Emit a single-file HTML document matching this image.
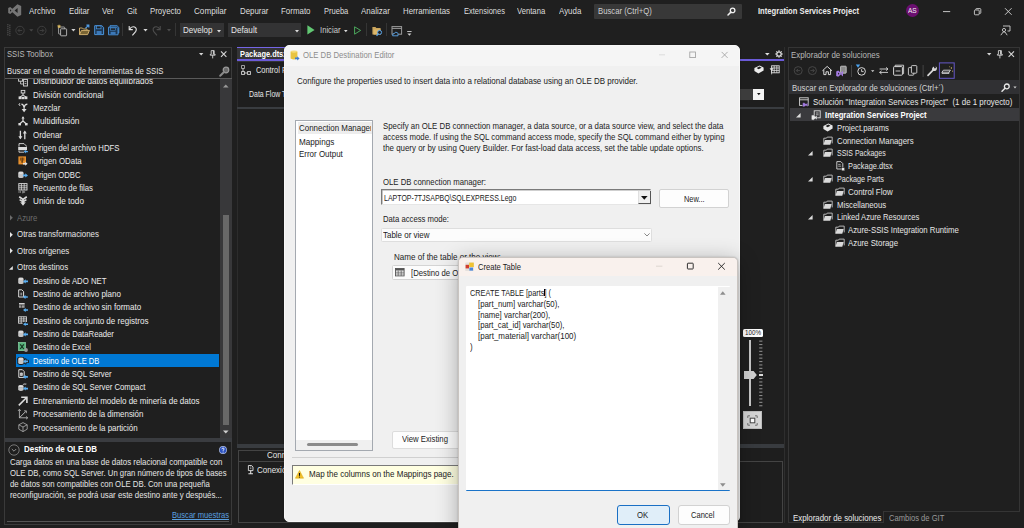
<!DOCTYPE html>
<html lang="es"><head><meta charset="utf-8"><title>Integration Services Project</title>
<style>
html,body{margin:0;padding:0;}
body{width:1024px;height:528px;overflow:hidden;background:#1f1f1f;position:relative;font-family:"Liberation Sans",sans-serif;font-size:8px;color:#e6e6e6;}
.b{position:absolute;box-sizing:border-box;}
.t{position:absolute;white-space:pre;line-height:12px;height:12px;font-size:8px;transform-origin:0 50%;}
.bold{font-weight:700;}
.dk{color:#1b1b1b;}
svg{position:absolute;overflow:visible;}
</style></head><body>

<div class="t " style="left:29px;top:5.20px;font-size:8.96px;transform:scaleX(0.8870);color:#dedede;">Archivo</div>
<div class="t " style="left:68.7px;top:5.20px;font-size:8.96px;transform:scaleX(0.8759);color:#dedede;">Editar</div>
<div class="t " style="left:102px;top:5.20px;font-size:8.96px;transform:scaleX(0.8774);color:#dedede;">Ver</div>
<div class="t " style="left:127px;top:5.20px;font-size:8.96px;transform:scaleX(0.8734);color:#dedede;">Git</div>
<div class="t " style="left:150px;top:5.20px;font-size:8.96px;transform:scaleX(0.8768);color:#dedede;">Proyecto</div>
<div class="t " style="left:194px;top:5.20px;font-size:8.96px;transform:scaleX(0.9066);color:#dedede;">Compilar</div>
<div class="t " style="left:239.5px;top:5.20px;font-size:8.96px;transform:scaleX(0.8805);color:#dedede;">Depurar</div>
<div class="t " style="left:281px;top:5.20px;font-size:8.96px;transform:scaleX(0.8844);color:#dedede;">Formato</div>
<div class="t " style="left:323.7px;top:5.20px;font-size:8.96px;transform:scaleX(0.8411);color:#dedede;">Prueba</div>
<div class="t " style="left:361.2px;top:5.20px;font-size:8.96px;transform:scaleX(0.8897);color:#dedede;">Analizar</div>
<div class="t " style="left:403px;top:5.20px;font-size:8.96px;transform:scaleX(0.8740);color:#dedede;">Herramientas</div>
<div class="t " style="left:463.5px;top:5.20px;font-size:8.96px;transform:scaleX(0.8400);color:#dedede;">Extensiones</div>
<div class="t " style="left:517.4px;top:5.20px;font-size:8.96px;transform:scaleX(0.8575);color:#dedede;">Ventana</div>
<div class="t " style="left:559px;top:5.20px;font-size:8.96px;transform:scaleX(0.8834);color:#dedede;">Ayuda</div>
<svg style="left:7.8px;top:4.2px" width="13.4" height="13" viewBox="0 0 13.4 13"><path d="M9.4 0.2 L13.2 1.9 V11.1 L9.4 12.8 L4.4 8.2 L2.2 10 L0.2 9 V4 L2.2 3 L4.4 4.8 Z M9.6 4 L6.6 6.5 L9.6 9 Z M2 5.2 V7.8 L3.4 6.5 Z" fill="#757575" fill-rule="evenodd"/></svg>
<div class="b " style="left:594px;top:3.5px;width:147.5px;height:15px;background:#383838;border-radius:1px;"></div>
<div class="t " style="left:597.7px;top:5.20px;font-size:8.96px;transform:scaleX(0.8627);color:#d0d0d0;">Buscar (Ctrl+Q)</div>
<svg style="left:727px;top:7px" width="9" height="9" viewBox="0 0 9 9"><circle cx="5.6" cy="3.4" r="2.3" fill="none" stroke="#f0f0f0" stroke-width="1.3"/><path d="M3.9 5.1 L1 8" stroke="#f0f0f0" stroke-width="1.5" stroke-linecap="round"/></svg>
<div class="t " style="left:758.3px;top:5.40px;font-size:8.96px;font-weight:700;transform:scaleX(0.8523);color:#ececec;">Integration Services Project</div>
<div class="b " style="left:905.8px;top:3.8px;width:13.4px;height:13.4px;background:#6b0f70;border-radius:50%;"></div>
<div class="t " style="left:907.9px;top:4.50px;font-size:7.62px;transform:scaleX(0.8563);color:#f4f4f4;">AS</div>
<svg style="left:943px;top:6px" width="70" height="12" viewBox="0 0 70 12"><path d="M0 5.6 H7.2" stroke="#d8d8d8" stroke-width="0.9"/><rect x="31.4" y="4" width="4.8" height="4.8" rx="0.8" fill="none" stroke="#d0d0d0" stroke-width="0.9"/><path d="M32.8 3.8 V3.2 Q32.8 2.6 33.4 2.6 H37 Q37.8 2.6 37.8 3.4 V6.8 Q37.8 7.4 37.2 7.4 H36.4" fill="none" stroke="#d0d0d0" stroke-width="0.9"/><path d="M62 2.2 L68.6 8.8 M68.6 2.2 L62 8.8" stroke="#d8d8d8" stroke-width="0.9"/></svg>
<svg style="left:1000px;top:25px" width="11" height="11" viewBox="0 0 11 11"><path d="M3 1 H10 V6 H7.5" fill="none" stroke="#cfcfcf" stroke-width="0.9"/><circle cx="4" cy="5" r="1.6" fill="none" stroke="#cfcfcf" stroke-width="0.9"/><path d="M0.8 10.2 L3.2 7 H5 L7.2 10.2" fill="none" stroke="#cfcfcf" stroke-width="0.9"/></svg>
<svg style="left:7px;top:23.8px" width="4" height="13" viewBox="0 0 4 13"><rect x="0" y="0.0" width="1.6" height="0.9" fill="#444"/><rect x="2" y="0.0" width="1.6" height="0.9" fill="#2c2c2c"/><rect x="2" y="1.0" width="1.6" height="0.9" fill="#444"/><rect x="0" y="1.0" width="1.6" height="0.9" fill="#2c2c2c"/><rect x="0" y="2.0" width="1.6" height="0.9" fill="#444"/><rect x="2" y="2.0" width="1.6" height="0.9" fill="#2c2c2c"/><rect x="2" y="3.0" width="1.6" height="0.9" fill="#444"/><rect x="0" y="3.0" width="1.6" height="0.9" fill="#2c2c2c"/><rect x="0" y="4.0" width="1.6" height="0.9" fill="#444"/><rect x="2" y="4.0" width="1.6" height="0.9" fill="#2c2c2c"/><rect x="2" y="5.0" width="1.6" height="0.9" fill="#444"/><rect x="0" y="5.0" width="1.6" height="0.9" fill="#2c2c2c"/><rect x="0" y="6.0" width="1.6" height="0.9" fill="#444"/><rect x="2" y="6.0" width="1.6" height="0.9" fill="#2c2c2c"/><rect x="2" y="7.0" width="1.6" height="0.9" fill="#444"/><rect x="0" y="7.0" width="1.6" height="0.9" fill="#2c2c2c"/><rect x="0" y="8.0" width="1.6" height="0.9" fill="#444"/><rect x="2" y="8.0" width="1.6" height="0.9" fill="#2c2c2c"/><rect x="2" y="9.0" width="1.6" height="0.9" fill="#444"/><rect x="0" y="9.0" width="1.6" height="0.9" fill="#2c2c2c"/><rect x="0" y="10.0" width="1.6" height="0.9" fill="#444"/><rect x="2" y="10.0" width="1.6" height="0.9" fill="#2c2c2c"/><rect x="2" y="11.0" width="1.6" height="0.9" fill="#444"/><rect x="0" y="11.0" width="1.6" height="0.9" fill="#2c2c2c"/></svg>
<svg style="left:15px;top:25px" width="34" height="11" viewBox="0 0 34 11"><circle cx="5" cy="5.5" r="4.2" fill="none" stroke="#414141" stroke-width="0.9"/><path d="M7.2 5.5 H3 M4.8 3.7 L3 5.5 L4.8 7.3" stroke="#414141" stroke-width="0.9" fill="none"/><path d="M14.2 4.2 H18.4 L16.3 6.6 Z" fill="#474747"/><circle cx="26.8" cy="5.5" r="4.2" fill="none" stroke="#414141" stroke-width="0.9"/><path d="M24.6 5.5 H28.8 M27 3.7 L28.8 5.5 L27 7.3" stroke="#414141" stroke-width="0.9" fill="none"/></svg>
<div class="b " style="left:51.5px;top:23.3px;width:1.2px;height:13px;background:#353535;"></div>
<svg style="left:57px;top:24px" width="20" height="13" viewBox="0 0 20 13"><rect x="1.6" y="3" width="6" height="7" rx="0.6" fill="none" stroke="#bdbdbd" stroke-width="0.8"/><rect x="3.6" y="4.8" width="6" height="7" rx="0.6" fill="#1f1f1f" stroke="#cdcdcd" stroke-width="0.8"/><path d="M2 0.2 L2.7 1.5 L4.2 1.7 L3.1 2.7 L3.4 4.2 L2 3.5 L0.7 4.2 L1 2.7 L-0.1 1.7 L1.4 1.5 Z" fill="#d9b860"/><path d="M14.3 5 H18.5 L16.4 7.5 Z" fill="#cfcfcf"/></svg>
<svg style="left:79px;top:24px" width="11" height="13" viewBox="0 0 11 13"><path d="M0.5 4 H3.4 L4.4 5 H8 V6" fill="none" stroke="#d4b26c" stroke-width="0.9"/><path d="M0.5 4 V10.6 H8.6 L10.4 6.4 H2.4 L0.6 10.4" fill="#7a6534" stroke="#dcb974" stroke-width="0.9"/><path d="M6.4 4.4 L9.2 1.6 M7.4 1.2 H9.8 V3.6" stroke="#4f9ce6" stroke-width="1.2" fill="none"/></svg>
<svg style="left:93.5px;top:25.3px" width="26" height="11" viewBox="0 0 26 11"><path d="M0.7 0.7 H7.8 L9.6 2.4 V9.6 H0.7 Z" fill="#1c3652" stroke="#4a94dc" stroke-width="1"/><rect x="2.6" y="1" width="4.4" height="2.8" fill="#1f1f1f" stroke="#4a94dc" stroke-width="0.7"/><rect x="2.6" y="6" width="5" height="3.4" fill="#3b78b8"/><path d="M16 0.7 H23 L24.8 2.4 V8 H16 Z" fill="#1c3652" stroke="#4a94dc" stroke-width="0.9"/><path d="M14.5 2.2 H22.6 L24 3.6 V9.8 H14.5 Z" fill="#1c3652" stroke="#4a94dc" stroke-width="0.9"/><rect x="16.4" y="3" width="5" height="2.2" fill="#1f1f1f" stroke="#4a94dc" stroke-width="0.6"/><rect x="16.6" y="6.8" width="5" height="2.8" fill="#3b78b8"/></svg>
<div class="b " style="left:122.3px;top:23.3px;width:1.2px;height:13px;background:#353535;"></div>
<svg style="left:127px;top:24px" width="46" height="13" viewBox="0 0 46 13"><path d="M2.2 2 V5.6 H5.8" fill="none" stroke="#e2e2e2" stroke-width="1.1"/><path d="M2.4 5.4 Q4.6 1.8 7.6 3 Q10.4 4.6 8.6 7.6 L5.4 11.4" fill="none" stroke="#e2e2e2" stroke-width="1.1"/><path d="M16.4 5.1 H20.6 L18.5 7.6 Z" fill="#d6d6d6"/><path d="M33.2 2 V5.6 H29.6" fill="none" stroke="#4d4d4d" stroke-width="1.1"/><path d="M33 5.4 Q30.8 1.8 27.8 3 Q25 4.6 26.8 7.6 L30 11.4" fill="none" stroke="#4d4d4d" stroke-width="1.1"/><path d="M40 5.1 H44 L42 7.5 Z" fill="#4c4c4c"/></svg>
<div class="b " style="left:174.6px;top:23.3px;width:1.2px;height:13px;background:#353535;"></div>
<div class="b " style="left:180px;top:23px;width:43.5px;height:14.3px;background:#333334;"></div>
<div class="t " style="left:183px;top:24.30px;font-size:8.96px;transform:scaleX(0.8974);color:#e6e6e6;">Develop</div>
<svg style="left:216.5px;top:29.5px" width="4" height="3" viewBox="0 0 4 3"><path d="M0 0 H4 L2 2.4 Z" fill="#dcdcdc"/></svg>
<div class="b " style="left:227.5px;top:23px;width:73.6px;height:14.3px;background:#333334;"></div>
<div class="t " style="left:230.5px;top:24.30px;font-size:8.96px;transform:scaleX(0.9159);color:#e6e6e6;">Default</div>
<svg style="left:294.5px;top:29.5px" width="4" height="3" viewBox="0 0 4 3"><path d="M0 0 H4 L2 2.4 Z" fill="#dcdcdc"/></svg>
<svg style="left:307px;top:25px" width="8" height="10" viewBox="0 0 8 10"><path d="M0.4 0.3 L7.6 4.9 L0.4 9.6 Z" fill="#62c873"/></svg>
<div class="t " style="left:320px;top:24.30px;font-size:8.96px;transform:scaleX(0.8578);color:#cdcdcd;">Iniciar</div>
<svg style="left:344px;top:29.5px" width="4" height="3" viewBox="0 0 4 3"><path d="M0 0 H3.6 L1.8 2.2 Z" fill="#dcdcdc"/></svg>
<svg style="left:353.5px;top:26px" width="8" height="9" viewBox="0 0 8 9"><path d="M0.6 0.8 L6.6 4.4 L0.6 8.2 Z" fill="none" stroke="#4aa85c" stroke-width="1"/></svg>
<div class="b " style="left:366px;top:23.3px;width:1.2px;height:13px;background:#353535;"></div>
<svg style="left:371.5px;top:25.5px" width="11" height="11" viewBox="0 0 11 11"><path d="M0.4 1 H3.4 L4.4 2 H8.6 V8.6 H0.4 Z" fill="#c9a45c"/><path d="M1.6 3.4 H8.6 V8.6 H1.6 Z" fill="#dcb76a"/><circle cx="7.6" cy="6.4" r="2" fill="#1f1f1f" stroke="#5aa5ea" stroke-width="1"/><path d="M6.2 7.8 L4.6 9.8" stroke="#5aa5ea" stroke-width="1.2"/></svg>
<div class="b " style="left:386px;top:23.3px;width:1.2px;height:13px;background:#353535;"></div>
<svg style="left:390.5px;top:25.5px" width="12" height="11" viewBox="0 0 12 11"><rect x="1" y="0.6" width="9.6" height="7.6" fill="none" stroke="#9c9c9c" stroke-width="1"/><path d="M1 2.4 H10.6" stroke="#9c9c9c" stroke-width="1"/><path d="M1.6 9.8 Q1.6 7 3.8 7.2 Q4.4 5.4 6 6.6 Q7.6 6.6 7 9.8 Z" fill="#1f1f1f" stroke="#5aa5ea" stroke-width="0.9"/></svg>
<svg style="left:406.5px;top:30.5px" width="5" height="6" viewBox="0 0 5 6"><path d="M0.2 0.5 H4.6" stroke="#cfcfcf" stroke-width="0.9"/><path d="M0.4 2.4 H4.4 L2.4 4.8 Z" fill="#cfcfcf"/></svg>
<div class="b " style="left:4px;top:47px;width:228px;height:478px;border:1px solid #3a3a3a;background:#1f1f1f;"></div>
<div class="t " style="left:7px;top:48.40px;font-size:8.96px;transform:scaleX(0.8578);color:#b8b8b8;">SSIS Toolbox</div>
<svg style="left:198.5px;top:50px" width="30" height="9" viewBox="0 0 30 9"><path d="M0 3 H4.4 L2.2 5.6 Z" fill="#d6d6d6"/><path d="M12.2 0.6 H15.2 V4.4 H16.2 V5.2 H11.2 V4.4 H12.2 Z M13.7 5.2 V8.4" fill="#1f1f1f" stroke="#d6d6d6" stroke-width="0.9"/><path d="M14.4 0.8 V4.6" stroke="#d6d6d6" stroke-width="1"/><path d="M22 1.4 L27.4 6.8 M27.4 1.4 L22 6.8" stroke="#d6d6d6" stroke-width="1.1"/></svg>
<div class="b " style="left:4.5px;top:78.2px;width:227px;height:1px;background:#5a5a5a;"></div>
<div class="t " style="left:6.5px;top:64.90px;font-size:8.96px;transform:scaleX(0.8586);color:#e6e6e6;">Buscar en el cuadro de herramientas de SSIS</div>
<svg style="left:218.5px;top:65.5px" width="11" height="11" viewBox="0 0 11 11"><circle cx="7" cy="4" r="2.8" fill="#6a6a6a" stroke="#9a9a9a" stroke-width="1.2"/><path d="M5 6 L1.2 9.8" stroke="#8a8a8a" stroke-width="2" stroke-linecap="round"/></svg>
<div class="b " style="left:5px;top:78.5px;width:215px;height:359px;background:#1f1f1f;"></div>
<div class="b " style="left:220px;top:79px;width:12px;height:358.8px;background:#38383a;"></div>
<div class="b " style="left:222.5px;top:214.5px;width:6.2px;height:210.5px;background:#686868;"></div>
<svg style="left:223px;top:83.5px" width="6" height="4" viewBox="0 0 6 4"><path d="M0 3.4 L2.8 0.4 L5.6 3.4 Z" fill="#9a9a9a"/></svg>
<svg style="left:223px;top:429.5px" width="6" height="4" viewBox="0 0 6 4"><path d="M0 0.4 L2.8 3.4 L5.6 0.4 Z" fill="#d0d0d0"/></svg>
<div class="b" style="left:5px;top:78.5px;width:215px;height:8px;overflow:hidden;">
<svg style="left:13px;top:-1.7px" width="10" height="10" viewBox="0 0 10 10"><rect x="0.6" y="0.8" width="4" height="3.4" fill="none" stroke="#dcdcdc" stroke-width="0.9"/><rect x="5.6" y="2.4" width="3.8" height="6.6" fill="none" stroke="#dcdcdc" stroke-width="0.9"/><path d="M2.6 4.4 V7 H5.4 M6.6 4.6 H8.4 M6.6 6.6 H8.4" stroke="#dcdcdc" stroke-width="0.8" fill="none"/></svg>
<div class="t" style="left:28px;top:-3.6px;color:#ececec;font-size:8.96px;transform:scaleX(0.9043);">Distribuidor de datos equilibrados</div>
</div>
<svg style="left:18px;top:89.55px" width="10" height="10" viewBox="0 0 10 10"><rect x="3.2" y="0.4" width="3.6" height="2.6" fill="none" stroke="#dcdcdc" stroke-width="0.9"/><path d="M5 3 V5 M5 5 L2 7 M5 5 L8 7" stroke="#dcdcdc" stroke-width="1"/><rect x="0.6" y="6.4" width="3" height="2.8" fill="#dcdcdc"/><rect x="6.4" y="6.4" width="3" height="2.8" fill="#dcdcdc"/><rect x="3.8" y="6.8" width="2.4" height="2.4" fill="#dcdcdc"/></svg>
<div class="t " style="left:33px;top:88.65px;font-size:8.96px;transform:scaleX(0.8960);color:#ececec;">División condicional</div>
<svg style="left:18px;top:102.80px" width="10" height="10" viewBox="0 0 10 10"><path d="M0.6 1 L2.2 3 M1 0.8 L2.2 0.8" stroke="#dcdcdc" stroke-width="0.9"/><path d="M3.4 1.2 Q5.6 1.4 6 4.4 M9.4 1.2 Q6.6 1.4 6.2 4.4 M6.1 4 V7" stroke="#dcdcdc" stroke-width="1.2" fill="none"/><path d="M3.6 6 H8.6 L6.1 9.2 Z" fill="#dcdcdc"/></svg>
<div class="t " style="left:33px;top:101.90px;font-size:8.96px;transform:scaleX(0.8689);color:#ececec;">Mezclar</div>
<svg style="left:18px;top:116.20px" width="10" height="10" viewBox="0 0 10 10"><path d="M5 0.8 V5 L1.6 8 M5 5 L8.4 8" stroke="#dcdcdc" stroke-width="1.2" fill="none"/><path d="M3.4 2.6 L5 0.4 L6.6 2.6 Z" fill="#dcdcdc"/><rect x="0.4" y="7" width="2.6" height="2.4" fill="#dcdcdc"/><rect x="7" y="7" width="2.6" height="2.4" fill="#dcdcdc"/></svg>
<div class="t " style="left:33px;top:115.30px;font-size:8.96px;transform:scaleX(0.9338);color:#ececec;">Multidifusión</div>
<svg style="left:18px;top:129.55px" width="10" height="10" viewBox="0 0 10 10"><path d="M2.4 0.8 V8.4 M6.8 1.6 V9.2" stroke="#dcdcdc" stroke-width="1.3"/><path d="M0.4 6.2 H4.4 L2.4 9.2 Z M4.8 3.6 H8.8 L6.8 0.6 Z" fill="#dcdcdc"/></svg>
<div class="t " style="left:33px;top:128.65px;font-size:8.96px;transform:scaleX(0.8824);color:#ececec;">Ordenar</div>
<svg style="left:18px;top:142.80px" width="10" height="10" viewBox="0 0 10 10"><path d="M1 3.6 V0.6 H6 L8.4 3 V3.6 M1 7.6 V9.2 H6" fill="none" stroke="#dcdcdc" stroke-width="0.9"/><rect x="0.2" y="4" width="8.8" height="3.2" fill="#dcdcdc"/><path d="M9.9 8 H7.8 V6.8 L5.8 8.6 L7.8 10.4 V9.2 H9.9 Z" fill="#58aef2"/></svg>
<div class="t " style="left:33px;top:141.90px;font-size:8.96px;transform:scaleX(0.8686);color:#ececec;">Origen del archivo HDFS</div>
<svg style="left:18px;top:156.20px" width="10" height="10" viewBox="0 0 10 10"><rect x="0.4" y="0.4" width="7.6" height="8" fill="#e8912d"/><path d="M2.4 1.6 V4.6 M5.8 1.6 V4.6" stroke="#7a4208" stroke-width="0.9"/><path d="M4.1 1.6 V6.8" stroke="#2a1a08" stroke-width="1.1"/><path d="M5 7 H7.2 V5.8 L9.6 7.8 L7.2 9.8 V8.6 H5 Z" fill="#e0e0e0"/></svg>
<div class="t " style="left:33px;top:155.30px;font-size:8.96px;transform:scaleX(0.8820);color:#ececec;">Origen OData</div>
<svg style="left:18px;top:169.55px" width="10" height="10" viewBox="0 0 10 10"><ellipse cx="2.9" cy="2.9" rx="2.7" ry="1.3" fill="#dcdcdc"/><path d="M0.2 3 V7.2 Q2.9 9 5.6 7.2 V3 Q2.9 4.8 0.2 3 Z" fill="#c4c4c4"/><path d="M10 5.4 L7.3 3.2 V4.6000000000000005 H5 V6.2 H7.3 V7.6000000000000005 Z" fill="#58aef2"/></svg>
<div class="t " style="left:33px;top:168.65px;font-size:8.96px;transform:scaleX(0.8595);color:#ececec;">Origen ODBC</div>
<svg style="left:18px;top:182.90px" width="10" height="10" viewBox="0 0 10 10"><rect x="0.8" y="0.6" width="8.2" height="6.4" fill="none" stroke="#dcdcdc" stroke-width="0.9"/><path d="M0.8 2.8 H9 M0.8 4.8 H9 M3.4 0.6 V7 M6.2 0.6 V7" stroke="#dcdcdc" stroke-width="0.8"/><path d="M1 8.2 V9.8 M2.4 8.2 V9.8 M4 8.2 H5.4 V9.8 H4 M6.6 8.2 V9.8" stroke="#dcdcdc" stroke-width="0.6" fill="none"/></svg>
<div class="t " style="left:33px;top:182.00px;font-size:8.96px;transform:scaleX(0.8667);color:#ececec;">Recuento de filas</div>
<svg style="left:18px;top:196.30px" width="10" height="10" viewBox="0 0 10 10"><path d="M1.2 0.8 L5 3.4 L8.8 0.8" stroke="#dcdcdc" stroke-width="1.7" fill="none"/><path d="M1.6 3.6 L5 5.8 L8.4 3.6" stroke="#dcdcdc" stroke-width="1.5" fill="none"/><path d="M5 4 V7" stroke="#dcdcdc" stroke-width="1.8"/><path d="M2.2 6.2 H7.8 L5 9.8 Z" fill="#dcdcdc"/></svg>
<div class="t " style="left:33px;top:195.40px;font-size:8.96px;transform:scaleX(0.9141);color:#ececec;">Unión de todo</div>
<svg style="left:10px;top:214.95px" width="3" height="6" viewBox="0 0 3 6"><path d="M0 0 L2.8 2.8 L0 5.6 Z" fill="#6c6c6c"/></svg>
<div class="t " style="left:16.5px;top:211.65px;font-size:8.96px;transform:scaleX(0.8652);color:#6c6c6c;">Azure</div>
<svg style="left:10px;top:231.70px" width="3" height="6" viewBox="0 0 3 6"><path d="M0 0 L2.8 2.8 L0 5.6 Z" fill="#e6e6e6"/></svg>
<div class="t " style="left:16.5px;top:228.40px;font-size:8.96px;transform:scaleX(0.8807);color:#e6e6e6;">Otras transformaciones</div>
<svg style="left:10px;top:248.20px" width="3" height="6" viewBox="0 0 3 6"><path d="M0 0 L2.8 2.8 L0 5.6 Z" fill="#e6e6e6"/></svg>
<div class="t " style="left:16.5px;top:244.90px;font-size:8.96px;transform:scaleX(0.8817);color:#e6e6e6;">Otros orígenes</div>
<svg style="left:8.6px;top:265.90px" width="4" height="4" viewBox="0 0 4 4"><path d="M3.8 0 V3.8 H0 Z" fill="#e6e6e6"/></svg>
<div class="t " style="left:16.5px;top:261.40px;font-size:8.96px;transform:scaleX(0.8872);color:#e6e6e6;">Otros destinos</div>
<svg style="left:18px;top:275.55px" width="10" height="10" viewBox="0 0 10 10"><ellipse cx="2.9" cy="2.9" rx="2.7" ry="1.3" fill="#dcdcdc"/><path d="M0.2 3 V7.2 Q2.9 9 5.6 7.2 V3 Q2.9 4.8 0.2 3 Z" fill="#c4c4c4"/><path d="M5 5.4 L7.7 3.2 V4.6000000000000005 H10 V6.2 H7.7 V7.6000000000000005 Z" fill="#58aef2"/></svg>
<div class="t " style="left:33px;top:274.65px;font-size:8.96px;transform:scaleX(0.8682);color:#ececec;">Destino de ADO NET</div>
<svg style="left:18px;top:288.90px" width="10" height="10" viewBox="0 0 10 10"><path d="M0.7 0.8 H3.8 L5.6 2.6 V8 H0.7 Z" fill="none" stroke="#dcdcdc" stroke-width="1"/><path d="M2.4 3.6 H4.2 V6.4 H2.4 Z" fill="#8a8a8a"/><path d="M4.8 8 L7.5 6 V7.2 H9.8 V8.8 H7.5 V10 Z" fill="#58aef2"/></svg>
<div class="t " style="left:33px;top:288.00px;font-size:8.96px;transform:scaleX(0.8924);color:#ececec;">Destino de archivo plano</div>
<svg style="left:18px;top:302.30px" width="10" height="10" viewBox="0 0 10 10"><rect x="1" y="1.6" width="5.6" height="4.2" fill="#9a9a9a"/><path d="M1 3 H6.6 M3.4 3 V5.8" stroke="#1f1f1f" stroke-width="0.6"/><path d="M1 1.6 H6.6" stroke="#dcdcdc" stroke-width="1"/><path d="M5 8 L7.7 6 V7.2 H10 V8.8 H7.7 V10 Z" fill="#58aef2"/></svg>
<div class="t " style="left:33px;top:301.40px;font-size:8.96px;transform:scaleX(0.8946);color:#ececec;">Destino de archivo sin formato</div>
<svg style="left:18px;top:315.60px" width="10" height="10" viewBox="0 0 10 10"><rect x="0.6" y="0.8" width="7.8" height="6.4" fill="none" stroke="#dcdcdc" stroke-width="0.9"/><path d="M0.6 2.9 H8.4 M0.6 5 H8.4 M3.2 0.8 V7.2 M5.8 0.8 V7.2" stroke="#dcdcdc" stroke-width="0.8"/><rect x="4.6" y="6" width="5.4" height="4" fill="#1f1f1f"/><path d="M5 8.2 L7.7 6.299999999999999 V7.3999999999999995 H10 V9.0 H7.7 V10.1 Z" fill="#58aef2"/></svg>
<div class="t " style="left:33px;top:314.70px;font-size:8.96px;transform:scaleX(0.8989);color:#ececec;">Destino de conjunto de registros</div>
<svg style="left:18px;top:329.00px" width="10" height="10" viewBox="0 0 10 10"><ellipse cx="2.9" cy="2.9" rx="2.7" ry="1.3" fill="#dcdcdc"/><path d="M0.2 3 V7.2 Q2.9 9 5.6 7.2 V3 Q2.9 4.8 0.2 3 Z" fill="#c4c4c4"/><path d="M5 5.4 L7.7 3.2 V4.6000000000000005 H10 V6.2 H7.7 V7.6000000000000005 Z" fill="#58aef2"/></svg>
<div class="t " style="left:33px;top:328.10px;font-size:8.96px;transform:scaleX(0.8651);color:#ececec;">Destino de DataReader</div>
<svg style="left:18px;top:342.30px" width="10" height="10" viewBox="0 0 10 10"><rect x="0.6" y="0.6" width="6.8" height="8" fill="#57b27c" stroke="#8ddcaa" stroke-width="0.7"/><path d="M2.2 2.4 L5.8 7 M5.8 2.4 L2.2 7" stroke="#16321f" stroke-width="1.2"/><circle cx="8" cy="8" r="1.9" fill="#9a9a9a"/></svg>
<div class="t " style="left:33px;top:341.40px;font-size:8.96px;transform:scaleX(0.8627);color:#ececec;">Destino de Excel</div>
<div class="b " style="left:16px;top:354px;width:203px;height:13.2px;background:#0078d4;"></div>
<svg style="left:18px;top:355.55px" width="10" height="10" viewBox="0 0 10 10"><g style="stroke:#1b1b1b;stroke-width:1.8;stroke-linejoin:round"><ellipse cx="2.9" cy="2.9" rx="2.7" ry="1.3" fill="#dcdcdc"/><path d="M0.2 3 V7.2 Q2.9 9 5.6 7.2 V3 Q2.9 4.8 0.2 3 Z" fill="#c4c4c4"/><path d="M5 5.4 L7.7 3.2 V4.6000000000000005 H10 V6.2 H7.7 V7.6000000000000005 Z" fill="#58aef2"/></g><ellipse cx="2.9" cy="2.9" rx="2.7" ry="1.3" fill="#dcdcdc"/><path d="M0.2 3 V7.2 Q2.9 9 5.6 7.2 V3 Q2.9 4.8 0.2 3 Z" fill="#c4c4c4"/><path d="M5 5.4 L7.7 3.2 V4.6000000000000005 H10 V6.2 H7.7 V7.6000000000000005 Z" fill="#58aef2"/></svg>
<div class="t " style="left:33px;top:354.65px;font-size:8.96px;transform:scaleX(0.8505);color:#fff;">Destino de OLE DB</div>
<svg style="left:18px;top:369.00px" width="10" height="10" viewBox="0 0 10 10"><path d="M0.8 0.7 H4.4 L6.2 2.5 V8.4 H0.8 Z" fill="none" stroke="#dcdcdc" stroke-width="1"/><ellipse cx="3.4" cy="4.4" rx="1.5" ry="0.8" fill="#dcdcdc"/><path d="M1.9 4.6 V6.6 Q3.4 7.6 4.9 6.6 V4.6" fill="#bdbdbd"/><path d="M4.9 7.9 L7.6000000000000005 5.9 V7.1000000000000005 H9.9 V8.700000000000001 H7.6000000000000005 V9.9 Z" fill="#58aef2"/></svg>
<div class="t " style="left:33px;top:368.10px;font-size:8.96px;transform:scaleX(0.8552);color:#ececec;">Destino de SQL Server</div>
<svg style="left:18px;top:382.30px" width="10" height="10" viewBox="0 0 10 10"><ellipse cx="2.9" cy="4.4" rx="2.7" ry="1.3" fill="#dcdcdc"/><path d="M0.2 4.5 V8 Q2.9 9.8 5.6 8 V4.5 Q2.9 6.3 0.2 4.5 Z" fill="#c4c4c4"/><path d="M4.6 2.6 Q6.4 0.2 8.8 1.8 L7.8 3 Q6.6 2 5.8 3.2 Z" fill="#9c9c9c"/><path d="M5 6.6 L7.7 4.6 V5.8 H10 V7.3999999999999995 H7.7 V8.6 Z" fill="#58aef2"/></svg>
<div class="t " style="left:33px;top:381.40px;font-size:8.96px;transform:scaleX(0.8645);color:#ececec;">Destino de SQL Server Compact</div>
<svg style="left:18px;top:395.70px" width="10" height="10" viewBox="0 0 10 10"><path d="M0.8 9.4 L8.4 1.8" stroke="#dcdcdc" stroke-width="1.6"/><path d="M3.2 1.3 H8.9 V7" stroke="#dcdcdc" stroke-width="1.6" fill="none"/></svg>
<div class="t " style="left:33px;top:394.80px;font-size:8.96px;transform:scaleX(0.8939);color:#ececec;">Entrenamiento del modelo de minería de datos</div>
<svg style="left:18px;top:409.05px" width="10" height="10" viewBox="0 0 10 10"><path d="M1.4 0.6 V8.8 H9.6" stroke="#b4b4b4" stroke-width="0.9" fill="none"/><path d="M1.4 8.8 L8 2.2" stroke="#c8c8c8" stroke-width="0.9"/><path d="M0 2 L1.4 0.2 L2.8 2 M8 7.4 L9.8 8.8 L8 10.2 M6 1.8 H8.4 V4.2" stroke="#b4b4b4" stroke-width="0.8" fill="none"/></svg>
<div class="t " style="left:33px;top:408.15px;font-size:8.96px;transform:scaleX(0.8840);color:#ececec;">Procesamiento de la dimensión</div>
<svg style="left:18px;top:422.40px" width="10" height="10" viewBox="0 0 10 10"><path d="M5 0.6 L9.2 2.8 V7.2 L5 9.6 L0.8 7.2 V2.8 Z M0.8 2.8 L5 5 L9.2 2.8 M5 5 V9.6" stroke="#b0b0b0" stroke-width="0.8" fill="none"/></svg>
<div class="t " style="left:33px;top:421.50px;font-size:8.96px;transform:scaleX(0.8875);color:#ececec;">Procesamiento de la partición</div>
<div class="b " style="left:4.5px;top:437.8px;width:227.5px;height:4.2px;background:#3a3c40;"></div>
<svg style="left:8px;top:443.5px" width="12" height="12" viewBox="0 0 12 12"><circle cx="6" cy="6" r="5.2" fill="none" stroke="#8c8c8c" stroke-width="0.8"/><path d="M3.8 5 L6 7.2 L8.2 5" stroke="#9c9c9c" stroke-width="0.9" fill="none"/></svg>
<div class="t " style="left:23.75px;top:443.40px;font-size:8.96px;font-weight:700;transform:scaleX(0.8888);color:#fff;">Destino de OLE DB</div>
<svg style="left:219px;top:446.2px" width="8" height="8" viewBox="0 0 8 8"><circle cx="4" cy="4" r="3.9" fill="#aebfe8"/><circle cx="4" cy="4" r="3.2" fill="#2c52c0"/><path d="M2.9 3.2 Q3 2 4.1 2 Q5.2 2.1 5.1 3.1 Q5 3.8 4.1 4.3 V4.9" stroke="#fff" stroke-width="0.9" fill="none"/><circle cx="4.1" cy="6" r="0.55" fill="#fff"/></svg>
<div class="t " style="left:9.5px;top:456.40px;font-size:8.96px;transform:scaleX(0.8815);color:#e6e6e6;">Carga datos en una base de datos relacional compatible con</div>
<div class="t " style="left:9.5px;top:467.10px;font-size:8.96px;transform:scaleX(0.8645);color:#e6e6e6;">OLE DB, como SQL Server. Un gran número de tipos de bases</div>
<div class="t " style="left:9.5px;top:477.90px;font-size:8.96px;transform:scaleX(0.8692);color:#e6e6e6;">de datos son compatibles con OLE DB. Con una pequeña</div>
<div class="t " style="left:9.5px;top:488.50px;font-size:8.96px;transform:scaleX(0.8741);color:#e6e6e6;">reconfiguración, se podrá usar este destino ante y después...</div>
<div class="t " style="left:171.75px;top:509.10px;font-size:8.96px;transform:scaleX(0.8480);color:#5aa0e0;text-decoration:underline;">Buscar muestras</div>
<div class="b " style="left:7px;top:521px;width:222px;height:1px;background:#555;"></div>
<div class="b " style="left:237px;top:46.8px;width:60px;height:15px;background:#343436;border-top:1.3px solid #7566e6;"></div>
<div class="t " style="left:239.75px;top:48.20px;font-size:8.96px;font-weight:700;transform:scaleX(0.8276);color:#fff;">Package.dtsx</div>
<div class="b " style="left:237px;top:59.4px;width:547px;height:1.8px;background:#6b5bd8;"></div>
<div class="b " style="left:236.5px;top:61.8px;width:547.5px;height:44.8px;background:#1e1e1e;border-left:1px solid #2c2c2c;"></div>
<div class="b " style="left:784px;top:47px;width:1px;height:476px;background:#2e2e2e;"></div>
<svg style="left:240.5px;top:64.5px" width="11" height="11" viewBox="0 0 11 11"><rect x="0.6" y="0.6" width="2.8" height="2.8" fill="none" stroke="#bcbcbc" stroke-width="0.8"/><path d="M2 3.4 V6.4" stroke="#d8d8d8" stroke-width="0.9"/><rect x="0.6" y="6.6" width="2.8" height="2.8" fill="none" stroke="#d8d8d8" stroke-width="0.9"/><path d="M3.6 8 H6.4" stroke="#d8d8d8" stroke-width="0.9"/><rect x="6.6" y="6.6" width="2.8" height="2.8" fill="none" stroke="#d8d8d8" stroke-width="0.9"/></svg>
<div class="t " style="left:255.75px;top:63.90px;font-size:8.96px;transform:scaleX(0.8260);color:#e6e6e6;">Control Flow</div>
<div class="t " style="left:248.75px;top:88.10px;font-size:8.51px;transform:scaleX(0.8183);color:#e6e6e6;">Data Flow Task:</div>
<svg style="left:764.5px;top:53px" width="5" height="3" viewBox="0 0 5 3"><path d="M0 0 H4.6 L2.3 2.6 Z" fill="#e0e0e0"/></svg>
<svg style="left:775px;top:49.5px" width="8" height="8" viewBox="0 0 8 8"><circle cx="4" cy="4" r="2.2" fill="none" stroke="#e0e0e0" stroke-width="1.3"/><path d="M4 0.2 V1.6 M4 6.4 V7.8 M0.2 4 H1.6 M6.4 4 H7.8 M1.3 1.3 L2.3 2.3 M5.7 5.7 L6.7 6.7 M1.3 6.7 L2.3 5.7 M5.7 2.3 L6.7 1.3" stroke="#e0e0e0" stroke-width="1"/></svg>
<svg style="left:753.5px;top:65px" width="10" height="9" viewBox="0 0 10 9"><path d="M0.4 3 L5.6 0.4 L9.6 2.6 V5.6 L4.4 8.4 L0.4 6 Z" fill="#ececec"/><path d="M2.6 3 L5.6 1.6 L7.6 2.7 L4.6 4.2 Z" fill="#1c1c1c"/></svg>
<svg style="left:770px;top:64.5px" width="10" height="10" viewBox="0 0 10 10"><rect x="1.6" y="0.8" width="7.6" height="7" fill="none" stroke="#e0e0e0" stroke-width="0.9"/><path d="M1.6 3 H9.2 M1.6 5.4 H9.2 M4.2 0.8 V7.8 M6.8 0.8 V7.8" stroke="#e0e0e0" stroke-width="0.8"/><path d="M0.2 3.6 H3 L1.6 5.6 Z M1.6 5.4 V9.4" fill="#e0e0e0" stroke="#e0e0e0" stroke-width="0.7"/></svg>
<div class="b " style="left:700px;top:88.5px;width:52.5px;height:11.3px;background:#3c3c3c;"></div>
<div class="b " style="left:752.5px;top:88.5px;width:11.5px;height:11.3px;background:#f4f4f4;"></div>
<svg style="left:756.5px;top:92.8px" width="4" height="3" viewBox="0 0 4 3"><path d="M0 0 H3.6 L1.8 2.2 Z" fill="#111"/></svg>
<div class="b " style="left:237px;top:106.6px;width:547px;height:2.5px;background:#393c40;"></div>
<div class="b " style="left:236.5px;top:109.1px;width:547.5px;height:335px;background:#1f1f1f;border-left:1px solid #2c2c2c;"></div>
<div class="b " style="left:743.4px;top:328.5px;width:19.3px;height:8.4px;background:#fff;border-radius:1.5px;"></div>
<div class="t " style="left:745px;top:326.50px;font-size:6.72px;transform:scaleX(0.9310);color:#1a1a1a;">100%</div>
<div class="b " style="left:749px;top:340px;width:2px;height:65.5px;background:#c9c9c9;"></div>
<svg style="left:758.8px;top:340px" width="4" height="66" viewBox="0 0 4 66"><rect x="0.2" y="0.6" width="3.2" height="1.1" fill="#8a8a8a"/><rect x="0.2" y="4.0" width="3.2" height="1.1" fill="#8a8a8a"/><rect x="0.2" y="7.4" width="3.2" height="1.1" fill="#8a8a8a"/><rect x="0.2" y="10.8" width="3.2" height="1.1" fill="#8a8a8a"/><rect x="0.2" y="14.2" width="3.2" height="1.1" fill="#8a8a8a"/><rect x="0.2" y="17.6" width="3.2" height="1.1" fill="#8a8a8a"/><rect x="0.2" y="21.0" width="3.2" height="1.1" fill="#8a8a8a"/><rect x="0.2" y="24.4" width="3.2" height="1.1" fill="#8a8a8a"/><rect x="0.2" y="27.8" width="3.2" height="1.1" fill="#8a8a8a"/><rect x="0.2" y="31.2" width="3.2" height="1.1" fill="#8a8a8a"/><rect x="0.2" y="34.6" width="3.2" height="1.1" fill="#8a8a8a"/><rect x="0.2" y="38.0" width="3.2" height="1.1" fill="#8a8a8a"/><rect x="0.2" y="41.4" width="3.2" height="1.1" fill="#8a8a8a"/><rect x="0.2" y="44.8" width="3.2" height="1.1" fill="#8a8a8a"/><rect x="0.2" y="48.2" width="3.2" height="1.1" fill="#8a8a8a"/><rect x="0.2" y="51.6" width="3.2" height="1.1" fill="#8a8a8a"/><rect x="0.2" y="55.0" width="3.2" height="1.1" fill="#8a8a8a"/><rect x="0.2" y="58.4" width="3.2" height="1.1" fill="#8a8a8a"/><rect x="0.2" y="61.8" width="3.2" height="1.1" fill="#8a8a8a"/><rect x="0.2" y="65.2" width="3.2" height="1.1" fill="#8a8a8a"/></svg>
<svg style="left:743.8px;top:371px" width="13" height="8" viewBox="0 0 13 8"><path d="M0 0 H9.6 L12.8 4 L9.6 8 H0 Z" fill="#d2d2d2"/></svg>
<div class="b " style="left:758.6px;top:374.2px;width:4px;height:1.6px;background:#dcdcdc;"></div>
<div class="b " style="left:743.3px;top:411px;width:19.2px;height:18.2px;background:#d6d6d6;border:1px solid #bdbdbd;"></div>
<svg style="left:747.4px;top:414.6px" width="11" height="11" viewBox="0 0 11 11"><rect x="3.2" y="3.2" width="4.6" height="4.6" fill="#fff" stroke="#444" stroke-width="1"/><path d="M0.8 3 V0.8 H3 M8 0.8 H10.2 V3 M10.2 8 V10.2 H8 M3 10.2 H0.8 V8" fill="none" stroke="#6a6a6a" stroke-width="0.9"/></svg>
<div class="b " style="left:237px;top:444.1px;width:547px;height:4px;background:#383b3f;"></div>
<div class="b " style="left:237px;top:448.3px;width:547px;height:74.5px;background:#1e1e1e;"></div>
<div class="b " style="left:238px;top:449.5px;width:300px;height:12px;border:1px solid #444;border-bottom:none;"></div>
<div class="b " style="left:238px;top:461px;width:544.5px;height:61.5px;border:1px solid #444;"></div>
<div class="t " style="left:267.3px;top:449.20px;font-size:8.96px;transform:scaleX(0.8929);color:#e6e6e6;">Connection Managers</div>
<svg style="left:246.5px;top:465px" width="8" height="10" viewBox="0 0 8 10"><path d="M1.4 0.5 H4.6 L6 2 V5.6 H1.4 Z" fill="none" stroke="#e0e0e0" stroke-width="0.9"/><path d="M3 2 H4.4 M3 3.6 H4.4" stroke="#e0e0e0" stroke-width="0.6"/><path d="M3.7 5.8 V8.4 M1.4 8.8 H6" stroke="#e0e0e0" stroke-width="1.1"/></svg>
<div class="t " style="left:257px;top:464.10px;font-size:8.96px;transform:scaleX(0.8929);color:#e6e6e6;">Conexión de archivos planos</div>
<div class="b " style="left:788px;top:47px;width:232px;height:465px;border:1px solid #353535;background:#1f1f1f;"></div>
<div class="t " style="left:791.25px;top:48.70px;font-size:8.96px;transform:scaleX(0.8822);color:#b8b8b8;">Explorador de soluciones</div>
<svg style="left:987.2px;top:50px" width="30" height="9" viewBox="0 0 30 9"><path d="M0 3 H4.4 L2.2 5.6 Z" fill="#d6d6d6"/><path d="M11.4 0.6 H14.4 V4.4 H15.4 V5.2 H10.4 V4.4 H11.4 Z M12.9 5.2 V8.4" fill="#1f1f1f" stroke="#d6d6d6" stroke-width="0.9"/><path d="M13.6 0.8 V4.6" stroke="#d6d6d6" stroke-width="1"/><path d="M21.6 1.4 L27 6.8 M27 1.4 L21.6 6.8" stroke="#d6d6d6" stroke-width="1.1"/></svg>
<svg style="left:793px;top:62px" width="165" height="17" viewBox="0 0 165 17"><circle cx="5.2" cy="8.6" r="4" fill="none" stroke="#4a4a4a" stroke-width="0.9"/><path d="M7.2 8.6 H3.4 M5 6.9 L3.3 8.6 L5 10.3" stroke="#4a4a4a" stroke-width="0.9" fill="none"/><circle cx="19.4" cy="8.6" r="4" fill="none" stroke="#4a4a4a" stroke-width="0.9"/><path d="M17.4 8.6 H21.2 M19.6 6.9 L21.3 8.6 L19.6 10.3" stroke="#4a4a4a" stroke-width="0.9" fill="none"/><path d="M29.4 8.8 L34.2 4.4 L39 8.8 M30.8 8 V12.6 H33 V9.8 H35.4 V12.6 H37.6 V8" fill="none" stroke="#d8d8d8" stroke-width="1"/><rect x="47.6" y="4.2" width="5.6" height="7" rx="0.6" fill="#8a8a8a" stroke="#d8d8d8" stroke-width="0.8"/><path d="M43.2 9.4 L45.2 8.6 L47.8 10.8 L50 9 V14.4 L47.8 12.6 L45.2 14.8 L43.2 14 Z M45 10.6 V12.8 L46.4 11.7 Z M48.6 10.8 L47.6 11.7 L48.6 12.6 Z" fill="#a37ae0" fill-rule="evenodd"/><rect x="58" y="3" width="1" height="12" fill="#454545"/><circle cx="68.6" cy="9.4" r="3.8" fill="none" stroke="#d8d8d8" stroke-width="1"/><path d="M68.6 7.2 V9.6 H70.6" stroke="#d8d8d8" stroke-width="0.9" fill="none"/><path d="M62.8 2.4 H67.2 L65 5.8 Z" fill="#4aa3f0"/><path d="M78 8.2 H81.4 L79.7 10 Z" fill="#d8d8d8"/><path d="M86.6 7 H95 M93 5.4 L95 7 L93 8.6 M95 10.4 H86.6 M88.6 8.8 L86.6 10.4 L88.6 12" stroke="#d8d8d8" stroke-width="0.9" fill="none"/><rect x="100.6" y="4.6" width="8.8" height="8.6" rx="0.8" fill="none" stroke="#d8d8d8" stroke-width="1"/><path d="M102.2 4.4 V3.2 H110.6 V11.6 H109.6 M102.6 9 H107.4" stroke="#d8d8d8" stroke-width="0.9" fill="none"/><rect x="115.4" y="5.6" width="5.4" height="7.6" rx="0.8" fill="none" stroke="#d8d8d8" stroke-width="0.9"/><rect x="118.4" y="3.6" width="5.4" height="7.6" rx="0.8" fill="#1f1f1f" stroke="#d8d8d8" stroke-width="0.9"/><rect x="129.6" y="3" width="1" height="12" fill="#454545"/><path d="M135 13.4 L139.6 8.6" stroke="#d8d8d8" stroke-width="1.7" stroke-linecap="round"/><path d="M139.4 8.8 Q138.2 6 140.6 4.4 L141.6 6.4 L143 6 L142.6 4.2 Q144.8 5.2 143.4 8.2 Q141.6 9.6 139.4 8.8 Z" fill="#d8d8d8"/><rect x="146.4" y="0.9" width="14.8" height="15.4" fill="none" stroke="#6558c8" stroke-width="1"/><path d="M149 10.2 L150.4 8.2 H157.4 L156 10.2 Z M149 10.2 V11.4 H156 V10.2" fill="none" stroke="#d8d8d8" stroke-width="0.9"/><path d="M158.4 5.4 V6.6 M157.8 6 H159 M159.6 8.6 V9.8 M156.6 4.4 V5.2" stroke="#e2c46a" stroke-width="0.7"/></svg>
<div class="b " style="left:789px;top:80px;width:230px;height:14.4px;background:#303033;"></div>
<div class="t " style="left:792.25px;top:81.70px;font-size:8.96px;transform:scaleX(0.8719);color:#d6d6d6;">Buscar en Explorador de soluciones (Ctrl+´)</div>
<svg style="left:1001px;top:83px" width="17" height="9" viewBox="0 0 17 9"><circle cx="5.8" cy="3.4" r="2.4" fill="none" stroke="#e8e8e8" stroke-width="1.3"/><path d="M4 5.2 L1 8.2" stroke="#e8e8e8" stroke-width="1.5" stroke-linecap="round"/><path d="M12.4 3.6 H15.6 L14 5.4 Z" fill="#d0d0d0"/></svg>
<svg style="left:799px;top:97.2px" width="10" height="10" viewBox="0 0 10 10"><rect x="0.6" y="0.8" width="8.6" height="7.6" fill="none" stroke="#d8d8d8" stroke-width="0.9"/><path d="M0.6 2.8 H9.2" stroke="#d8d8d8" stroke-width="0.9"/><path d="M3.6 6 L5 5.4 L7 7 L8.8 5.6 V9.8 L7 8.4 L5 10 L3.6 9.4 Z" fill="#a37ae0" stroke="#1f1f1f" stroke-width="0.4"/></svg>
<div class="t " style="left:812.5px;top:96.30px;font-size:8.96px;transform:scaleX(0.8848);color:#e6e6e6;">Solución &quot;Integration Services Project&quot;  (1 de 1 proyecto)</div>
<div class="b " style="left:789.5px;top:108.2px;width:229.5px;height:12.6px;background:#3a3a3d;"></div>
<svg style="left:795.5px;top:112.80px" width="4.8" height="4.8" viewBox="0 0 4.8 4.8"><path d="M4.6 0 V4.6 H0 Z" fill="#dcdcdc"/></svg>
<svg style="left:811px;top:109.8px" width="10" height="10" viewBox="0 0 10 10"><rect x="3.2" y="0.8" width="6" height="7" fill="none" stroke="#dcdcdc" stroke-width="0.9"/><path d="M5 3 H7.6 M5 4.8 H7.6" stroke="#dcdcdc" stroke-width="0.7"/><path d="M0.4 5.6 L2.2 4.8 L4.4 6.6 L6 5.4 V9.8 L4.4 8.6 L2.2 10.2 L0.4 9.6 Z" fill="#e8e8e8" stroke="#3a3a3d" stroke-width="0.4"/></svg>
<div class="t " style="left:824.6px;top:109.10px;font-size:8.96px;font-weight:700;transform:scaleX(0.8582);color:#fff;">Integration Services Project</div>
<svg style="left:822.5px;top:123.30px" width="10" height="9" viewBox="0 0 10 9"><path d="M0.4 3 L5.4 0.4 L9.6 2.6 V5.6 L4.6 8.4 L0.4 6 Z" fill="#e6e6e6"/><path d="M2.6 3 L5.4 1.6 L7.4 2.7 L4.6 4.2 Z" fill="#1f1f1f"/></svg>
<div class="t " style="left:836.7px;top:121.80px;font-size:8.96px;transform:scaleX(0.8631);color:#e6e6e6;">Project.params</div>
<svg style="left:822.5px;top:135.80px" width="10" height="10" viewBox="0 0 10 10"><path d="M0.8 8.4 V2.2 H3.4 L4.2 1.1 H9.2 V7.4" fill="none" stroke="#c4c4c4" stroke-width="0.9"/><path d="M0.4 8.8 L2 4.1 H8.7 L7.3 8.8 Z" fill="#dadada"/></svg>
<div class="t " style="left:836.7px;top:134.70px;font-size:8.96px;transform:scaleX(0.8739);color:#e6e6e6;">Connection Managers</div>
<svg style="left:807.7px;top:151.00px" width="4.8" height="4.8" viewBox="0 0 4.8 4.8"><path d="M4.6 0 V4.6 H0 Z" fill="#dcdcdc"/></svg>
<svg style="left:822.5px;top:148.40px" width="10" height="10" viewBox="0 0 10 10"><path d="M0.8 8.4 V2.2 H3.4 L4.2 1.1 H9.2 V7.4" fill="none" stroke="#c4c4c4" stroke-width="0.9"/><path d="M0.4 8.8 L2 4.1 H8.7 L7.3 8.8 Z" fill="#dadada"/></svg>
<div class="t " style="left:836.7px;top:147.30px;font-size:8.96px;transform:scaleX(0.7823);color:#e6e6e6;">SSIS Packages</div>
<svg style="left:835.5px;top:161.20px" width="9" height="10" viewBox="0 0 9 10"><path d="M0.8 0.6 H4.8 L6.8 2.6 V8 H0.8 Z" fill="none" stroke="#d8d8d8" stroke-width="0.9"/><path d="M2.2 3.4 H4.6 M2.2 5.2 H5.2" stroke="#d8d8d8" stroke-width="0.7"/><rect x="5.6" y="6.8" width="3" height="3" fill="#e6e6e6" stroke="#1f1f1f" stroke-width="0.4"/></svg>
<div class="t " style="left:848.2px;top:160.10px;font-size:8.96px;transform:scaleX(0.8310);color:#e6e6e6;">Package.dtsx</div>
<svg style="left:807.7px;top:176.70px" width="4.8" height="4.8" viewBox="0 0 4.8 4.8"><path d="M4.6 0 V4.6 H0 Z" fill="#dcdcdc"/></svg>
<svg style="left:822.5px;top:174.10px" width="10" height="10" viewBox="0 0 10 10"><path d="M0.8 8.4 V2.2 H3.4 L4.2 1.1 H9.2 V7.4" fill="none" stroke="#c4c4c4" stroke-width="0.9"/><path d="M0.4 8.8 L2 4.1 H8.7 L7.3 8.8 Z" fill="#dadada"/></svg>
<div class="t " style="left:836.7px;top:173.00px;font-size:8.96px;transform:scaleX(0.8066);color:#e6e6e6;">Package Parts</div>
<svg style="left:834.5px;top:186.80px" width="10" height="10" viewBox="0 0 10 10"><path d="M0.8 8.4 V2.2 H3.4 L4.2 1.1 H9.2 V7.4" fill="none" stroke="#c4c4c4" stroke-width="0.9"/><path d="M0.4 8.8 L2 4.1 H8.7 L7.3 8.8 Z" fill="#dadada"/></svg>
<div class="t " style="left:848.2px;top:185.70px;font-size:8.96px;transform:scaleX(0.8889);color:#e6e6e6;">Control Flow</div>
<svg style="left:822.5px;top:199.60px" width="10" height="10" viewBox="0 0 10 10"><path d="M0.8 8.4 V2.2 H3.4 L4.2 1.1 H9.2 V7.4" fill="none" stroke="#c4c4c4" stroke-width="0.9"/><path d="M0.4 8.8 L2 4.1 H8.7 L7.3 8.8 Z" fill="#dadada"/></svg>
<div class="t " style="left:836.7px;top:198.50px;font-size:8.96px;transform:scaleX(0.8649);color:#e6e6e6;">Miscellaneous</div>
<svg style="left:807.7px;top:215.00px" width="4.8" height="4.8" viewBox="0 0 4.8 4.8"><path d="M4.6 0 V4.6 H0 Z" fill="#dcdcdc"/></svg>
<svg style="left:822.5px;top:212.40px" width="10" height="10" viewBox="0 0 10 10"><path d="M0.8 8.4 V2.2 H3.4 L4.2 1.1 H9.2 V7.4" fill="none" stroke="#c4c4c4" stroke-width="0.9"/><path d="M0.4 8.8 L2 4.1 H8.7 L7.3 8.8 Z" fill="#dadada"/></svg>
<div class="t " style="left:836.7px;top:211.30px;font-size:8.96px;transform:scaleX(0.8485);color:#e6e6e6;">Linked Azure Resources</div>
<svg style="left:834.5px;top:225.30px" width="10" height="10" viewBox="0 0 10 10"><path d="M0.8 8.4 V2.2 H3.4 L4.2 1.1 H9.2 V7.4" fill="none" stroke="#c4c4c4" stroke-width="0.9"/><path d="M0.4 8.8 L2 4.1 H8.7 L7.3 8.8 Z" fill="#dadada"/></svg>
<div class="t " style="left:848.2px;top:224.20px;font-size:8.96px;transform:scaleX(0.8699);color:#e6e6e6;">Azure-SSIS Integration Runtime</div>
<svg style="left:834.5px;top:238.20px" width="10" height="10" viewBox="0 0 10 10"><path d="M0.8 8.4 V2.2 H3.4 L4.2 1.1 H9.2 V7.4" fill="none" stroke="#c4c4c4" stroke-width="0.9"/><path d="M0.4 8.8 L2 4.1 H8.7 L7.3 8.8 Z" fill="#dadada"/></svg>
<div class="t " style="left:848.2px;top:237.10px;font-size:8.96px;transform:scaleX(0.8747);color:#e6e6e6;">Azure Storage</div>
<div class="b " style="left:788px;top:510.8px;width:96px;height:12.6px;background:#1f1f1f;border:1px solid #353535;border-top:none;"></div>
<div class="t " style="left:792.6px;top:511.50px;font-size:8.96px;transform:scaleX(0.8787);color:#ececec;">Explorador de soluciones</div>
<div class="t " style="left:888.8px;top:511.50px;font-size:8.96px;transform:scaleX(0.8493);color:#9a9a9a;">Cambios de GIT</div>
<div class="b " style="left:283.5px;top:45px;width:456.3px;height:476.6px;background:#f0f0f0;border-radius:5px;border:1px solid #f8f8f8;box-shadow:0 0 1.5px rgba(0,0,0,0.35);overflow:hidden;"><div class="b" style="left:0;top:0;width:457px;height:20px;background:#f5f5f5;"></div></div>
<svg style="left:289.5px;top:49.5px" width="10" height="11" viewBox="0 0 10 11"><ellipse cx="4" cy="1.8" rx="3.4" ry="1.4" fill="#f5dc7a"/><path d="M0.6 1.8 V8.4 Q4 10.4 7.4 8.4 V1.8 Q4 3.8 0.6 1.8 Z" fill="#e8c441"/><path d="M9.6 8.4 L7.2 6.2 V7.6 H5 V9.2 H7.2 V10.6 Z" fill="#3f7fd0"/></svg>
<div class="t " style="left:302.5px;top:49.30px;font-size:8.96px;transform:scaleX(0.8626);color:#8c8c8c;">OLE DB Destination Editor</div>
<svg style="left:658px;top:51px" width="72" height="8" viewBox="0 0 72 8"><path d="M1 3.8 H7" stroke="#d6d6d6" stroke-width="0.8"/><rect x="31.8" y="1" width="5.6" height="5.6" fill="none" stroke="#9c9c9c" stroke-width="0.8"/><path d="M63.6 0.9 L69.6 6.9 M69.6 0.9 L63.6 6.9" stroke="#9c9c9c" stroke-width="0.8"/></svg>
<div class="t " style="left:297px;top:74.60px;font-size:8.96px;transform:scaleX(0.8892);color:#1b1b1b;">Configure the properties used to insert data into a relational database using an OLE DB provider.</div>
<div class="b " style="left:295px;top:120px;width:77.5px;height:330.6px;background:#fff;border:1px solid #a4a9b0;"></div>
<div class="b " style="left:297.5px;top:122px;width:74px;height:12.2px;background:#ededed;"></div>
<div class="b " style="left:296px;top:439.8px;width:76px;height:9.8px;background:#f0f0f0;"></div>
<div class="b " style="left:307.4px;top:442.8px;width:51px;height:3px;background:#8c8c8c;border-radius:1.5px;"></div>
<div class="b" style="left:296px;top:121px;width:75.4px;height:40px;overflow:hidden;"><div class="t" style="left:2.7px;top:0.7px;color:#1b1b1b;font-size:9.30px;transform:scaleX(0.8534);">Connection Manager</div></div>
<div class="t " style="left:298.7px;top:135.50px;font-size:9.30px;transform:scaleX(0.8758);color:#1b1b1b;">Mappings</div>
<div class="t " style="left:298.7px;top:148.10px;font-size:9.30px;transform:scaleX(0.8564);color:#1b1b1b;">Error Output</div>
<div class="t " style="left:382.5px;top:120.40px;font-size:8.96px;transform:scaleX(0.8731);color:#1b1b1b;">Specify an OLE DB connection manager, a data source, or a data source view, and select the data</div>
<div class="t " style="left:382.5px;top:131.00px;font-size:8.96px;transform:scaleX(0.8724);color:#1b1b1b;">access mode. If using the SQL command access mode, specify the SQL command either by typing</div>
<div class="t " style="left:382.5px;top:141.70px;font-size:8.96px;transform:scaleX(0.8829);color:#1b1b1b;">the query or by using Query Builder. For fast-load data access, set the table update options.</div>
<div class="t " style="left:382.5px;top:176.40px;font-size:8.96px;transform:scaleX(0.8653);color:#1b1b1b;">OLE DB connection manager:</div>
<div class="b " style="left:380.5px;top:189px;width:270.8px;height:15.5px;background:#fff;border:1px solid #7a7a7a;border-right-color:#dcdcdc;border-bottom-color:#e6e6e6;box-shadow:inset 0.6px 0.6px 0 #a0a0a0;"></div>
<div class="b " style="left:637.5px;top:190.5px;width:13px;height:13.6px;background:#f0f0f0;border-right:1px solid #555;border-bottom:1px solid #555;border-left:1px solid #e0e0e0;"></div>
<svg style="left:640.8px;top:195.5px" width="7" height="4" viewBox="0 0 7 4"><path d="M0 0 H6.6 L3.3 3.8 Z" fill="#111"/></svg>
<div class="t " style="left:384px;top:191.90px;font-size:8.96px;transform:scaleX(0.7833);color:#1b1b1b;">LAPTOP-7TJSAPBQ\SQLEXPRESS.Lego</div>
<div class="b " style="left:659.3px;top:189.3px;width:69.3px;height:19px;background:#fdfdfd;border:1px solid #d2d2d2;border-radius:2px;"></div>
<div class="t " style="left:683.5px;top:192.90px;font-size:8.96px;transform:scaleX(0.8234);color:#1b1b1b;">New...</div>
<div class="t " style="left:382.5px;top:213.10px;font-size:8.96px;transform:scaleX(0.8606);color:#1b1b1b;">Data access mode:</div>
<div class="b " style="left:380.5px;top:227.5px;width:271.5px;height:14.2px;background:#fcfcfc;border:1px solid #dedede;border-radius:1.5px;"></div>
<div class="t " style="left:382.5px;top:228.60px;font-size:8.96px;transform:scaleX(0.8893);color:#1b1b1b;">Table or view</div>
<svg style="left:643.5px;top:233px" width="6" height="4" viewBox="0 0 6 4"><path d="M0.4 0.4 L3 3 L5.6 0.4" fill="none" stroke="#6a6a6a" stroke-width="0.8"/></svg>
<div class="t " style="left:393.7px;top:250.90px;font-size:8.96px;transform:scaleX(0.8982);color:#1b1b1b;">Name of the table or the view:</div>
<div class="b " style="left:391.5px;top:265px;width:180px;height:14.6px;background:#fcfcfc;border:1px solid #d4d4d4;border-radius:1.5px;"></div>
<svg style="left:395px;top:267.6px" width="10" height="9" viewBox="0 0 10 9"><rect x="0.5" y="0.5" width="8.6" height="7.4" fill="#fff" stroke="#555" stroke-width="0.9"/><rect x="0.5" y="0.5" width="8.6" height="2" fill="#555"/><path d="M0.5 4.2 H9.1 M0.5 6 H9.1 M3.2 2.5 V7.9 M6.2 2.5 V7.9" stroke="#555" stroke-width="0.7"/></svg>
<div class="t " style="left:410.5px;top:266.90px;font-size:8.96px;transform:scaleX(0.8635);color:#1b1b1b;">[Destino de OLE DB]</div>
<div class="b " style="left:392px;top:431px;width:110px;height:17.6px;background:#fdfdfd;border:1px solid #dcdcdc;border-radius:2px;"></div>
<div class="t " style="left:402.3px;top:432.50px;font-size:8.96px;transform:scaleX(0.8660);color:#1b1b1b;">View Existing</div>
<div class="t " style="left:462px;top:432.50px;font-size:8.96px;transform:scaleX(0.8929);color:#1b1b1b;">Data...</div>
<div class="b " style="left:292px;top:457.2px;width:441px;height:1px;background:#d0d0d0;"></div>
<div class="b " style="left:292px;top:465px;width:441px;height:20px;background:#ffffe1;border-top:1px solid #7a7a7a;border-left:1px solid #7a7a7a;border-bottom:1px solid #fff;"></div>
<svg style="left:295.4px;top:470.2px" width="9" height="9" viewBox="0 0 9 9"><path d="M4.5 0.5 L8.6 8.2 H0.4 Z" fill="#f2c12a" stroke="#d9a514" stroke-width="0.5"/><path d="M4.5 3 V5.8" stroke="#111" stroke-width="1.1"/><circle cx="4.5" cy="7" r="0.6" fill="#111"/></svg>
<div class="t " style="left:308.5px;top:468.20px;font-size:8.96px;transform:scaleX(0.8946);color:#1b1b1b;">Map the columns on the Mappings page.</div>
<div class="b " style="left:458.2px;top:256.5px;width:279.6px;height:290px;background:#f0f0f0;border-radius:5px;border:1px solid #c9c4c0;box-shadow:0 4px 22px rgba(0,0,0,0.3),0 0 2px rgba(0,0,0,0.22);overflow:hidden;"><div class="b" style="left:0;top:0;width:280px;height:18.8px;background:#f9f1ed;"></div></div>
<svg style="left:464.5px;top:262px" width="9" height="9" viewBox="0 0 9 9"><rect x="0.3" y="0.6" width="8.6" height="8.4" rx="0.6" fill="#e4e0dc"/><rect x="0.6" y="2.8" width="3.4" height="3.6" fill="#cf3d2e"/><rect x="4.2" y="0.6" width="4.6" height="4.4" fill="#efc234"/><rect x="4.4" y="5.6" width="3.6" height="3" fill="#4a86dc"/></svg>
<div class="t " style="left:477.5px;top:260.70px;font-size:8.96px;transform:scaleX(0.8492);color:#1b1b1b;">Create Table</div>
<svg style="left:655px;top:262px" width="72" height="9" viewBox="0 0 72 9"><path d="M1 4.2 H7.4" stroke="#d8cfc9" stroke-width="0.8"/><rect x="32.4" y="1.2" width="5.8" height="5.8" rx="0.6" fill="none" stroke="#1b1b1b" stroke-width="0.9"/><path d="M63.2 1 L69.8 7.6 M69.8 1 L63.2 7.6" stroke="#1b1b1b" stroke-width="0.9"/></svg>
<div class="b " style="left:466.2px;top:286.1px;width:263.4px;height:205.4px;background:#fff;border-bottom:1.2px solid #1a73c8;border-radius:1px;"></div>
<div class="b " style="left:718px;top:286.6px;width:11.6px;height:203.6px;background:#f0f0f0;"></div>
<svg style="left:720px;top:290.5px" width="6" height="4" viewBox="0 0 6 4"><path d="M0 3.8 L2.8 0.2 L5.6 3.8 Z" fill="#8e8e8e"/></svg>
<svg style="left:720px;top:483px" width="6" height="4" viewBox="0 0 6 4"><path d="M0 0.2 L2.8 3.8 L5.6 0.2 Z" fill="#8e8e8e"/></svg>
<div class="t " style="left:469.5px;top:287.10px;font-size:8.96px;transform:scaleX(0.8216);color:#1b1b1b;">CREATE TABLE [parts] (</div>
<div class="t " style="left:478px;top:297.90px;font-size:8.96px;transform:scaleX(0.8706);color:#1b1b1b;">[part_num] varchar(50),</div>
<div class="t " style="left:478px;top:308.50px;font-size:8.96px;transform:scaleX(0.8688);color:#1b1b1b;">[name] varchar(200),</div>
<div class="t " style="left:478px;top:319.20px;font-size:8.96px;transform:scaleX(0.8642);color:#1b1b1b;">[part_cat_id] varchar(50),</div>
<div class="t " style="left:478px;top:329.90px;font-size:8.96px;transform:scaleX(0.8888);color:#1b1b1b;">[part_material] varchar(100)</div>
<div class="t " style="left:469.5px;top:340.60px;font-size:8.96px;transform:scaleX(0.8929);color:#1b1b1b;">)</div>
<div class="b " style="left:543.8px;top:288.8px;width:0.8px;height:7.6px;background:#000;"></div>
<div class="b " style="left:617px;top:505px;width:52.5px;height:20px;background:#e0eef9;border:1.2px solid #1a6fc4;border-radius:3px;"></div>
<div class="t " style="left:637px;top:509.10px;font-size:8.96px;transform:scaleX(0.8690);color:#1b1b1b;">OK</div>
<div class="b " style="left:677.5px;top:505px;width:52px;height:20px;background:#fdfdfd;border:1px solid #d2d2d2;border-radius:3px;"></div>
<div class="t " style="left:691px;top:509.10px;font-size:8.96px;transform:scaleX(0.8426);color:#1b1b1b;">Cancel</div>
</body></html>
